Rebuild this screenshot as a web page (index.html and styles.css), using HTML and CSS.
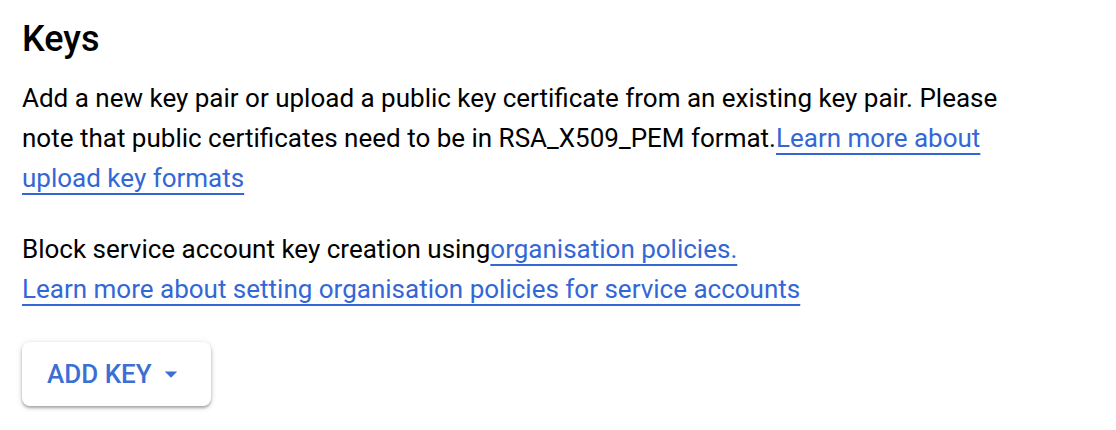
FILE: index.html
```html
<!DOCTYPE html>
<html lang="en">
<head>
  <meta charset="UTF-8" />
  <title>Keys</title>
  <link rel="stylesheet" href="styles.css">
</head>
<body>

  <div class="keys">
    <h1>Keys</h1>

    <p>Add a new key pair or upload a public key certificate from an existing key pair. Please note that public certificates need to be in RSA_X509_PEM format.<a href="#">Learn more about upload key formats</a></p>

    <p>Block service account key creation using<a href="#">organisation policies.</a><br>
      <a href="#">Learn more about setting organisation policies for service accounts</a></p>

    <!-- Boton con menu desplegable -->
    <button class="btn-add">
      ADD KEY
      <svg class="arrow" width="30" height="30" viewBox="0 0 24 24"><path d="M7 10l5 5 5-5z" fill="currentColor"/></svg>
    </button>
  </div>

</body>
</html>
```

FILE: styles.css
```css
body {
  margin: 0;
  font-family: Roboto, "Noto Sans", Arial, sans-serif;
  background: white;
  color: #202124;
}

.keys {
  width: 1020px;
  padding: 19px 22px;
}

h1 {
  font-size: 36px;
  font-weight: 500;
  line-height: 40px;
  margin: 0 0 19px;
  color: #000;
}

p {
  font-size: 26px;
  line-height: 40px;
  margin: 0 0 31px;
  color: #000;
}

a {
  color: #3367d6;
  text-decoration: underline;
  text-decoration-thickness: 2px;
  text-underline-offset: 6px;
}

.btn-add {
  display: flex;
  align-items: center;
  gap: 4px;
  height: 64px;
  margin-top: 33px;
  padding: 0 25px 0 25px;
  border: none;
  border-radius: 8px;
  background: white;
  color: #3b6fd4;
  font-family: Roboto, Arial, sans-serif;
  font-size: 26px;
  font-weight: 500;
  cursor: pointer;
  box-shadow: 0 2px 3px rgba(0, 0, 0, 0.3), 0 1px 7px rgba(0, 0, 0, 0.12);
}
```
